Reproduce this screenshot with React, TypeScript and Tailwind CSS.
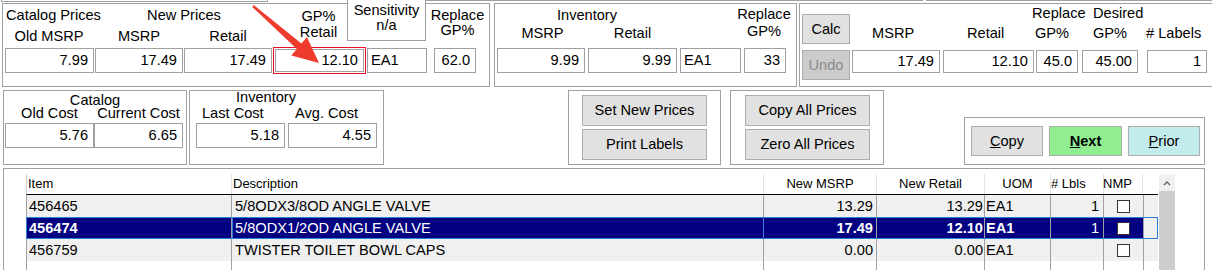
import React from 'react'

interface FieldProps {
  value: string
  className?: string
  h?: string
  left?: boolean
}

function Field({ value, className = '', h = 'h-[25px]', left = false }: FieldProps) {
  return (
    <div
      className={`${h} shrink-0 border border-[#a0a0a0] bg-white flex items-center whitespace-nowrap ${
        left ? 'justify-start pl-[3px]' : 'justify-end pr-[5px]'
      } ${className}`}
    >
      {value}
    </div>
  )
}

function Btn({ className = '', children }: { className?: string; children: React.ReactNode }) {
  return (
    <button
      type="button"
      className={`shrink-0 flex items-center justify-center border border-[#adadad] whitespace-nowrap leading-none ${className}`}
    >
      {children}
    </button>
  )
}

// bold only matters for the selected row
const COLS = [
  { key: 'item', w: 'w-[205px] border-r', head: 'Item', headCls: 'justify-start pl-[1px]', cellCls: 'justify-start pl-[2px]', bold: true },
  { key: 'desc', w: 'w-[532px] border-r', head: 'Description', headCls: 'justify-start pl-[1px]', cellCls: 'justify-start pl-[3px]', bold: false },
  { key: 'msrp', w: 'w-[113px] border-r', head: 'New MSRP', headCls: 'justify-center', cellCls: 'justify-end pr-[3px]', bold: true },
  { key: 'retail', w: 'w-[108px] border-r', head: 'New Retail', headCls: 'justify-center', cellCls: 'justify-end pr-[1px]', bold: true },
  { key: 'uom', w: 'w-[66px] border-r', head: 'UOM', headCls: 'justify-center', cellCls: 'justify-start pl-[1px]', bold: true },
  { key: 'lbls', w: 'w-[53px] border-r', head: '# Lbls', headCls: 'justify-start', cellCls: 'justify-end pr-[4px]', bold: false },
  { key: 'nmp', w: 'w-[40px] border-r', head: 'NMP', headCls: 'justify-start -ml-[1px]', cellCls: 'justify-center', bold: false },
  { key: 'pad', w: 'w-[14px]', head: '', headCls: '', cellCls: '', bold: false },
] as const

type Row = {
  item: string
  desc: string
  msrp: string
  retail: string
  uom: string
  lbls: string
  selected?: boolean
}

const ROWS: Row[] = [
  { item: '456465', desc: '5/8ODX3/8OD ANGLE VALVE', msrp: '13.29', retail: '13.29', uom: 'EA1', lbls: '1' },
  { item: '456474', desc: '5/8ODX1/2OD ANGLE VALVE', msrp: '17.49', retail: '12.10', uom: 'EA1', lbls: '1', selected: true },
  { item: '456759', desc: 'TWISTER TOILET BOWL CAPS', msrp: '0.00', retail: '0.00', uom: 'EA1', lbls: '' },
]

function cellText(row: Row, key: string) {
  switch (key) {
    case 'item':
      return row.item
    case 'desc':
      return row.desc
    case 'msrp':
      return row.msrp
    case 'retail':
      return row.retail
    case 'uom':
      return row.uom
    case 'lbls':
      return row.lbls
    default:
      return ''
  }
}

function PriceGrid() {
  return (
    <div className="w-[1132px] h-[96px] flex flex-col shrink-0">
      {/* header */}
      <div className="flex h-[21px] border-b border-b-black border-l border-l-[#d4d4d4] bg-white text-[13px] leading-[13px]">
        {COLS.map((c) => (
          <div key={c.key} className={`${c.w} h-full flex items-start pt-[3px] border-[#e3e3e3] whitespace-nowrap ${c.headCls}`}>
            {c.head}
          </div>
        ))}
      </div>

      {/* rows */}
      {ROWS.map((row) => (
        <div
          key={row.item}
          className={`flex h-[22px] border-l border-[#a0a0a0] ${
            row.selected ? 'relative z-10 outline outline-[#2d7fd6] -outline-offset-1' : ''
          }`}
        >
          {COLS.map((c) => {
            const onNavy = row.selected && c.key !== 'pad'
            return (
              <div
                key={c.key}
                className={`${c.w} h-full flex items-center border-[#a0a0a0] whitespace-nowrap overflow-hidden ${c.cellCls} ${
                  onNavy ? 'bg-[#000080] text-white' : 'bg-[#f0f0f0]'
                } ${onNavy && c.bold ? 'font-bold' : ''} ${
                  row.selected && c.key === 'desc' ? 'outline outline-[#2d7fd6] -outline-offset-1' : ''
                }`}
              >
                {c.key === 'nmp' ? (
                  <div className="w-[13px] h-[13px] border border-[#333333] bg-white -ml-[1px]" />
                ) : (
                  cellText(row, c.key)
                )}
              </div>
            )
          })}
        </div>
      ))}

      {/* empty space below rows keeps the column lines */}
      <div className="flex flex-1 border-l border-[#a0a0a0]">
        {COLS.map((c) => (
          <div key={c.key} className={`${c.w} h-full border-[#a0a0a0]`} />
        ))}
      </div>
    </div>
  )
}

export default function App() {
  return (
    <div className="relative w-[1212px] h-[270px] overflow-hidden bg-white text-black text-[14.6px] leading-none font-['Liberation_Sans',Arial,sans-serif]">
      {/* edges of the panels above */}
      <div className="flex h-[3px]">
        <div className="ml-[1px] w-[267px] h-[2px] border-x border-b border-[#a0a0a0]" />
        <div className="ml-[142px] w-[513px] h-[1px] bg-[#a0a0a0]" />
        <div className="ml-[3px] flex-1 h-[1px] bg-[#a0a0a0]" />
      </div>

      {/* price groups */}
      <div className="flex h-[84px]">
        {/* Catalog / New prices */}
        <div className="ml-[2px] w-[488px] h-full shrink-0 border border-[#a0a0a0]">
          <div className="flex h-[44px]">
            <div className="w-[92px] shrink-0 pt-[3px] leading-[17px]">
              <div className="pl-[3px] whitespace-nowrap">Catalog Prices</div>
              <div className="mt-[4px] text-center whitespace-nowrap">Old MSRP</div>
            </div>
            <div className="w-[178px] shrink-0 pt-[3px] leading-[17px]">
              <div className="text-center">New Prices</div>
              <div className="mt-[4px] flex">
                <div className="w-[88px] text-center">MSRP</div>
                <div className="w-[90px] text-center">Retail</div>
              </div>
            </div>
            <div className="w-[74px] shrink-0 pl-[17px] pt-[4px] leading-[16px] text-center">
              <div>GP%</div>
              <div>Retail</div>
            </div>
            <div className="w-[79px] h-[41px] shrink-0 -mt-[4px] bg-white border-x border-b border-[#a0a0a0] pt-[3px] leading-[15px] text-center whitespace-nowrap">
              <div>Sensitivity</div>
              <div>n/a</div>
            </div>
            <div className="w-[63px] shrink-0 pt-[4px] leading-[15px] text-center">
              <div>Replace</div>
              <div>GP%</div>
            </div>
          </div>
          <div className="flex items-start">
            <Field className="ml-[2px] w-[89px]" value="7.99" />
            <Field className="ml-[1px] w-[88px]" value="17.49" />
            <Field className="ml-[1px] w-[88px]" value="17.49" />
            <div className="ml-[1px] -mt-[1px] w-[93px] h-[27px] shrink-0 border border-[#e81123] p-[1px]">
              <Field className="w-full" h="h-[23px]" value="12.10" />
            </div>
            <Field className="ml-[1px] w-[60px]" value="EA1" left />
            <Field className="ml-[7px] w-[42px]" value="62.0" />
          </div>
        </div>

        {/* Inventory */}
        <div className="ml-[4px] w-[303px] h-full shrink-0 border border-[#a0a0a0]">
          <div className="flex h-[44px]">
            <div className="ml-[2px] w-[180px] shrink-0 pt-[3px] leading-[17px]">
              <div className="text-center">Inventory</div>
              <div className="mt-[1px] flex">
                <div className="w-[91px] text-center">MSRP</div>
                <div className="w-[89px] text-center">Retail</div>
              </div>
            </div>
            <div className="ml-[57px] w-[60px] shrink-0 pt-[2px] leading-[17px] text-center">
              <div>Replace</div>
              <div>GP%</div>
            </div>
          </div>
          <div className="flex">
            <Field className="ml-[2px] w-[88px]" value="9.99" />
            <Field className="ml-[3px] w-[89px]" value="9.99" />
            <Field className="ml-[3px] w-[61px]" value="EA1" left />
            <Field className="ml-[3px] w-[42px]" value="33" />
          </div>
        </div>

        {/* Calc */}
        <div className="ml-[2px] w-[420px] h-full shrink-0 border border-[#a0a0a0] flex">
          <div className="ml-[2px] w-[48px] shrink-0 flex flex-col">
            <Btn className="mt-[10px] h-[30px] w-full bg-[#e1e1e1]">Calc</Btn>
            <Btn className="mt-[6px] h-[30px] w-full bg-[#cccccc] text-[#8a8a8a]">Undo</Btn>
          </div>
          <div className="ml-[2px] w-[88px] shrink-0 flex flex-col">
            <div className="h-[46px] pt-[21px] pl-[20px] leading-[17px]">MSRP</div>
            <Field className="w-full" h="h-[23px]" value="17.49" />
          </div>
          <div className="ml-[3px] w-[91px] shrink-0 flex flex-col">
            <div className="h-[46px] pt-[21px] pl-[24px] leading-[17px]">Retail</div>
            <Field className="w-full" h="h-[23px]" value="12.10" />
          </div>
          <div className="ml-[2px] w-[42px] shrink-0 flex flex-col">
            <div className="h-[46px] pt-[1px] leading-[17px] whitespace-nowrap">
              <div className="-ml-[4px]">Replace</div>
              <div className="mt-[3px] -ml-[1px]">GP%</div>
            </div>
            <Field className="w-full" h="h-[23px]" value="45.0" />
          </div>
          <div className="ml-[4px] w-[56px] shrink-0 flex flex-col">
            <div className="h-[46px] pt-[1px] pl-[11px] leading-[17px] whitespace-nowrap">
              <div>Desired</div>
              <div className="mt-[3px]">GP%</div>
            </div>
            <Field className="w-full" h="h-[23px]" value="45.00" />
          </div>
          <div className="ml-[9px] w-[60px] shrink-0 flex flex-col">
            <div className="h-[46px] pt-[21px] -ml-[1px] leading-[17px] whitespace-nowrap"># Labels</div>
            <Field className="w-full" h="h-[23px]" value="1" />
          </div>
        </div>
      </div>

      {/* costs and actions */}
      <div className="flex items-start h-[81px]">
        <div className="ml-[3px] mt-[3px] w-[184px] h-[75px] shrink-0 border border-[#a0a0a0]">
          <div className="h-[32px] pt-[3px] leading-[13px] whitespace-nowrap">
            <div className="text-center">Catalog</div>
            <div className="flex">
              <div className="ml-[1px] w-[89px] text-center">Old Cost</div>
              <div className="w-[89px] text-center">Current Cost</div>
            </div>
          </div>
          <div className="flex">
            <Field className="ml-[1px] w-[89px]" value="5.76" />
            <Field className="w-[89px]" value="6.65" />
          </div>
        </div>

        <div className="ml-[2px] mt-[3px] w-[195px] h-[75px] shrink-0 border border-[#a0a0a0]">
          <div className="h-[32px] leading-[13px] whitespace-nowrap">
            <div className="pl-[46px]">Inventory</div>
            <div className="mt-[3px] flex">
              <div className="ml-[12px] w-[93px]">Last Cost</div>
              <div>Avg. Cost</div>
            </div>
          </div>
          <div className="flex">
            <Field className="ml-[6px] w-[89px]" value="5.18" />
            <Field className="ml-[3px] w-[89px]" value="4.55" />
          </div>
        </div>

        <div className="ml-[184px] mt-[3px] w-[153px] h-[75px] shrink-0 border border-[#a0a0a0] flex flex-col">
          <Btn className="ml-[13px] mt-[4px] w-[125px] h-[31px] bg-[#e1e1e1]">Set New Prices</Btn>
          <Btn className="ml-[13px] mt-[3px] w-[125px] h-[31px] bg-[#e1e1e1]">Print Labels</Btn>
        </div>

        <div className="ml-[9px] mt-[3px] w-[154px] h-[75px] shrink-0 border border-[#a0a0a0] flex flex-col">
          <Btn className="ml-[14px] mt-[4px] w-[125px] h-[31px] bg-[#e1e1e1]">Copy All Prices</Btn>
          <Btn className="ml-[14px] mt-[3px] w-[125px] h-[31px] bg-[#e1e1e1]">Zero All Prices</Btn>
        </div>

        <div className="ml-[80px] mt-[30px] w-[241px] h-[48px] shrink-0 border border-[#a0a0a0] flex items-start">
          <Btn className="ml-[6px] mt-[8px] w-[72px] h-[30px] bg-[#e1e1e1]">
            <span className="underline">C</span>opy
          </Btn>
          <Btn className="ml-[6px] mt-[8px] w-[73px] h-[30px] bg-[#90ee90] font-bold">
            <span className="underline">N</span>ext
          </Btn>
          <Btn className="ml-[6px] mt-[8px] w-[72px] h-[30px] bg-[#c2ecec]">
            <span className="underline">P</span>rior
          </Btn>
        </div>
      </div>

      {/* item list */}
      <div className="ml-[3px] w-[1202px] h-[102px] border-x border-t border-[#a0a0a0]">
        <div className="flex ml-[22px] mt-[5px] h-[96px]">
          <PriceGrid />
          <div className="ml-[1px] w-[16px] h-full shrink-0 flex flex-col bg-[#f0f0f0]">
            <div className="h-[17px] flex items-center justify-center">
              <svg width="8" height="6" viewBox="0 0 8 6">
                <path d="M1 5 L4 2 L7 5" fill="none" stroke="#606060" strokeWidth="1.4" />
              </svg>
            </div>
            <div className="flex-1 bg-[#cdcdcd]" />
          </div>
        </div>
      </div>

      {/* annotation arrow */}
      <svg className="absolute left-0 top-0 pointer-events-none" width="1212" height="270" viewBox="0 0 1212 270">
        <polygon
          points="252.2,6.9 296.8,48.9 291.3,55.4 319,63 306.9,37 301.4,43.5 253.8,5.1"
          fill="#ef3b2d"
        />
      </svg>
    </div>
  )
}
